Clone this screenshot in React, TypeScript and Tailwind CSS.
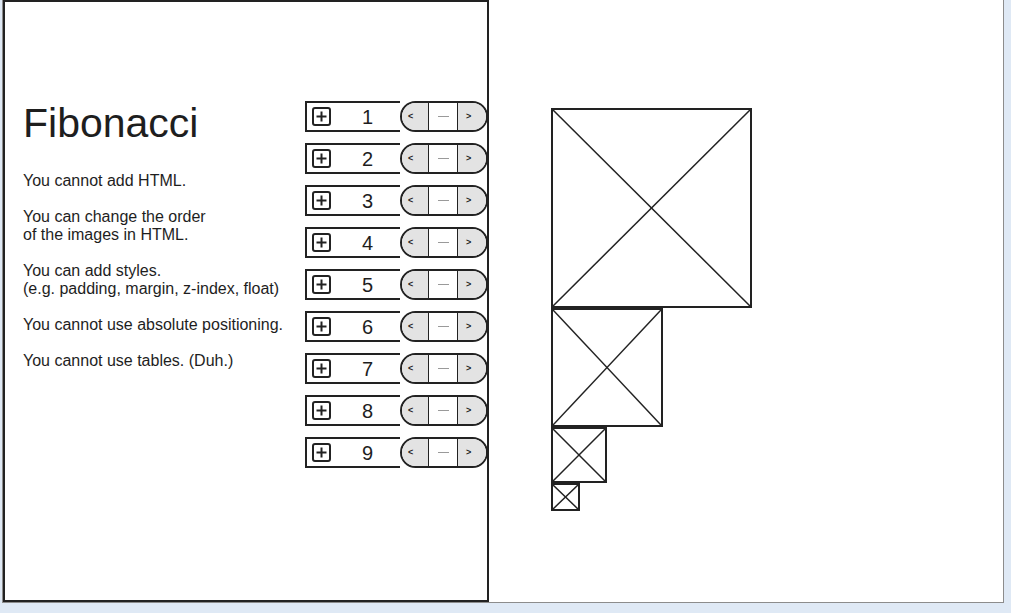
import React from 'react';

const rules: React.ReactNode[] = [
  'You cannot add HTML.',
  <>You can change the order<br />of the images in HTML.</>,
  <>You can add styles.<br />(e.g. padding, margin, z-index, float)</>,
  'You cannot use absolute positioning.',
  'You cannot use tables. (Duh.)',
];

const images = [
  { w: 'w-[201px]', h: 'h-[200px]' },
  { w: 'w-[112px]', h: 'h-[119px]' },
  { w: 'w-[56px]', h: 'h-[56px]' },
  { w: 'w-[29px]', h: 'h-[28px]' },
];

const PlusIcon: React.FC = () => (
  <div className="w-[19px] h-[19px] border-2 border-[#222] rounded-[3px] flex items-center justify-center">
    <svg width="13" height="13" viewBox="0 0 13 13">
      <path d="M6.5 1.5v10M1.5 6.5h10" stroke="#222" strokeWidth="2" />
    </svg>
  </div>
);

const Row: React.FC<{ n: number }> = ({ n }) => (
  <div className="flex h-[31px]">
    <div className="flex items-center flex-1 border-l-2 border-y-2 border-[#222] pl-[5px]">
      <PlusIcon />
      <span className="flex-1 text-center text-[20px] leading-none pl-[4px]">{n}</span>
    </div>
    <div className="flex w-[88px] border-2 border-[#222] rounded-full overflow-hidden">
      <div className="w-[27px] bg-[#e3e3e3] border-r border-[#222] flex items-center pl-[6px] text-[9px] font-bold leading-none">&lt;</div>
      <div className="w-[28px] flex items-center justify-center">
        <div className="w-[11px] h-px bg-[#9a9a9a]" />
      </div>
      <div className="flex-1 bg-[#e3e3e3] border-l border-[#222] flex items-center pl-[8px] text-[9px] font-bold leading-none">&gt;</div>
    </div>
  </div>
);

const Placeholder: React.FC<{ w: string; h: string }> = ({ w, h }) => (
  <div className={`${w} ${h} border-2 border-[#222] shrink-0`}>
    <svg className="w-full h-full block" viewBox="0 0 100 100" preserveAspectRatio="none">
      <line x1="0" y1="0" x2="100" y2="100" stroke="#222" strokeWidth="1.5" vectorEffect="non-scaling-stroke" />
      <line x1="100" y1="0" x2="0" y2="100" stroke="#222" strokeWidth="1.5" vectorEffect="non-scaling-stroke" />
    </svg>
  </div>
);

const App: React.FC = () => {
  return (
    <div className="min-h-screen bg-[#dfe9f5] pl-[2px] text-[#1e1e1e]" style={{ fontFamily: '"Liberation Sans", Arial, sans-serif' }}>
      <div className="flex w-[1002px] h-[603px] bg-white border-l border-r border-b border-[#8c8c8c]">
        <section className="flex w-[486px] h-[602px] border-2 border-[#222] pt-[99px]">
          <div className="flex-1 pl-[18px] pt-[2px]">
            <h1 className="text-[41px] leading-[41px] font-normal">Fibonacci</h1>
            <div className="mt-[28px] flex flex-col gap-[18px] text-[16px] leading-[18px]">
              {rules.map((r, i) => (
                <p key={i}>{r}</p>
              ))}
            </div>
          </div>
          <div className="w-[183px] -mr-px flex flex-col gap-[11px]">
            {[1, 2, 3, 4, 5, 6, 7, 8, 9].map((n) => (
              <Row key={n} n={n} />
            ))}
          </div>
        </section>
        <div className="flex flex-col pl-[62px] pt-[108px]">
          {images.map((img, i) => (
            <Placeholder key={i} w={img.w} h={img.h} />
          ))}
        </div>
      </div>
    </div>
  );
};

export default App;
